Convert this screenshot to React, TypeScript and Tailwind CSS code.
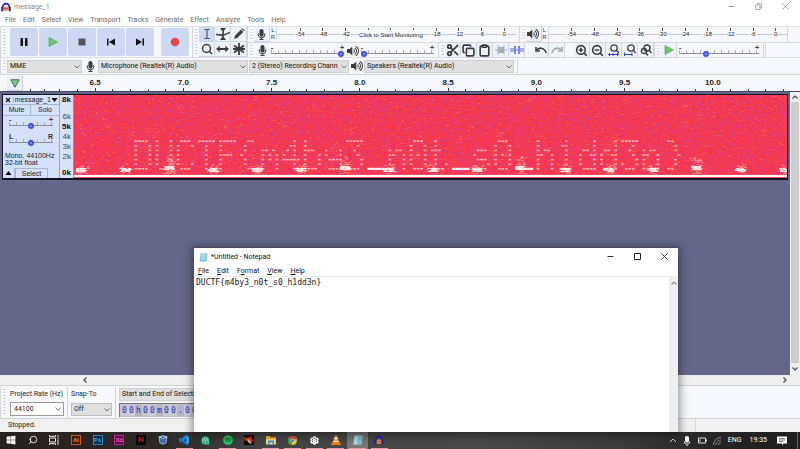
import React from "react";
import { Scissors, Copy, Clipboard, ZoomIn, ZoomOut, Search, Settings } from "lucide-react";
import { FaMicrophone, FaVolumeUp, FaSpotify, FaWindows } from "react-icons/fa";

/* ---------- Spectrogram ---------- */

const GLYPHS: Record<string, string[]> = {
  D: ["####.", "#...#", "#...#", "#...#", "#...#", "#...#", "####."],
  U: ["#...#", "#...#", "#...#", "#...#", "#...#", "#...#", ".###."],
  C: [".###.", "#...#", "#....", "#....", "#....", "#...#", ".###."],
  T: ["#####", "..#..", "..#..", "..#..", "..#..", "..#..", "..#.."],
  F: ["#####", "#....", "#....", "####.", "#....", "#....", "#...."],
  "{": ["..##.", ".#...", ".#...", "#....", ".#...", ".#...", "..##."],
  "}": [".##..", "...#.", "...#.", "....#", "...#.", "...#.", ".##.."],
  m: [".....", ".....", "##.#.", "#.#.#", "#.#.#", "#...#", "#...#"],
  "4": ["...#.", "..##.", ".#.#.", "#..#.", "#####", "...#.", "...#."],
  b: ["#....", "#....", "###..", "#...#", "#...#", "#...#", "####."],
  y: [".....", ".....", "#...#", "#...#", ".####", "....#", ".###."],
  "3": ["#####", "...#.", "..#..", "...#.", "....#", "#...#", ".###."],
  _: [".....", ".....", ".....", ".....", ".....", ".....", "#####"],
  n: [".....", ".....", "#.##.", "##..#", "#...#", "#...#", "#...#"],
  "0": [".###.", "#...#", "#...#", "#.#.#", "#...#", "#...#", ".###."],
  t: [".#...", ".#...", "###..", ".#...", ".#...", ".#..#", "..##."],
  s: [".....", ".....", ".###.", "#....", ".###.", "....#", "####."],
  h: ["#....", "#....", "#.##.", "##..#", "#...#", "#...#", "#...#"],
  "1": ["..#..", ".##..", "..#..", "..#..", "..#..", "..#..", ".###."],
  d: ["....#", "....#", ".##.#", "#..##", "#...#", "#...#", ".####"],
};
const MESSAGE = "DUCTF{m4by3_n0t_s0_h1dd3n}";

function random(seed: number) {
  let s = seed;
  return () => {
    s ^= s << 13;
    s ^= s >>> 17;
    s ^= s << 5;
    return (s >>> 0) / 4294967296;
  };
}

const NOISE = ["#fc3c40", "#ec3a66", "#e43c80", "#fa5048", "#f87058", "#d440a4", "#b850d0"];

function noisePaths() {
  const rnd = random(7919);
  const out = NOISE.map(() => "");
  for (let y = 0; y < 83; y++) {
    for (let x = 0; x < 714; x += 2) {
      const r = rnd();
      let k = -1;
      if (r < 0.2) k = 0;
      else if (r < 0.42) k = 1;
      else if (r < 0.55) k = 2;
      else if (r < 0.62) k = 3;
      else if (r < 0.637) k = 4;
      else if (r < 0.69 - y / 3500) k = 5;
      else if (r > 0.985 + y / 8000) k = 6;
      if (k >= 0) out[k] += `M${x} ${y}h2v1h-2z`;
    }
  }
  return out;
}
const PATHS = noisePaths();

function bursts() {
  const rnd = random(2111);
  const soft: string[] = [];
  const hard: string[] = [];
  for (let i = 0; i < 17; i++) {
    const cx = 7 + i * 44;
    const tall = i % 4 === 2;
    const cy = tall ? 72 : 74;
    for (let n = 0; n < (tall ? 60 : 34); n++) {
      const x = cx + Math.round((rnd() + rnd() - 1) * 7);
      const y = cy + Math.round((rnd() + rnd() - 1) * (tall ? 12 : 6));
      soft.push(`M${x} ${Math.min(y, 78)}h2v1h-2z`);
    }
    for (let n = 0; n < 26; n++) {
      const x = cx - 5 + Math.floor(rnd() * 9);
      const y = cy - 1 + Math.floor(rnd() * 4);
      hard.push(`M${x} ${y}h3v1h-3z`);
    }
  }
  return [soft.join(""), hard.join("")];
}
const [SOFT, HARD] = bursts();

function Spectrogram() {
  const cells: React.ReactNode[] = [];
  MESSAGE.split("").forEach((c, i) =>
    GLYPHS[c].forEach((row, r) =>
      row.split("").forEach((bit, k) => {
        if (bit !== "#") return;
        const solid = c === "_";
        cells.push(
          <rect
            key={`${i}-${r}-${k}`}
            x={60.5 + i * 21.2 + k * 3.53}
            y={45.4 + r * 4.6 - (solid ? 0.2 : 0)}
            width={solid ? 3.6 : 2.8}
            height={solid ? 2.2 : 1.6}
            fill={solid ? "#fff6f0" : "#ffc4ba"}
            opacity={solid ? 1 : 0.85}
          />
        );
      })
    )
  );
  return (
    <svg role="img" aria-label="Spectrogram" className="block h-[83px] w-full min-w-0 flex-1" viewBox="0 0 714 83" preserveAspectRatio="none">
      <rect width="714" height="83" fill="#f4364e" />
      {PATHS.map((d, i) => (
        <path key={i} d={d} fill={NOISE[i]} opacity="0.8" />
      ))}
      {cells}
      <path d={SOFT} fill="#ffb0a8" opacity="0.6" />
      <path d={HARD} fill="#fff0ea" opacity="0.9" />
      <rect y="79" width="714" height="4" fill="#f5485e" />
      <rect y="80" width="714" height="2" fill="#fff" />
    </svg>
  );
}

/* ---------- Shared controls ---------- */

function Grip() {
  return (
    <div className="flex w-[7px] shrink-0 self-stretch border-l border-[#d4d6dc] py-[2px] pl-[2px]">
      <div className="w-[3px] bg-[repeating-linear-gradient(#d2d4da_0_1px,#f6f8fe_1px_3px)]" />
    </div>
  );
}

function Tool({ label, children, active }: { label: string; children: React.ReactNode; active?: boolean }) {
  return (
    <button
      aria-label={label}
      className={
        "flex h-[15px] w-[16px] shrink-0 items-center justify-center border-r border-b border-[#d0d5e2] text-[#3c3c3c] " +
        (active ? "bg-[#cddaf3]" : "bg-[#eef3fd]")
      }
    >
      {children}
    </button>
  );
}

function Chevron({ className }: { className?: string }) {
  return (
    <svg viewBox="0 0 6 4" className={"h-[4px] w-[6px] " + (className ?? "")} fill="none" stroke="#555" strokeWidth="0.8">
      <path d="M0.5 0.5L3 3L5.5 0.5" />
    </svg>
  );
}

function Picker({ label, value, className, box }: { label: string; value: string; className: string; box: string }) {
  return (
    <div className={"relative shrink-0 " + className}>
      <select
        aria-label={label}
        className={"block h-[13px] w-full appearance-none border pl-[2px] text-[7px] leading-[11px] text-[#111] " + box}
      >
        <option>{value}</option>
      </select>
      <Chevron className="pointer-events-none absolute top-[5px] right-[2px]" />
    </div>
  );
}

function Slider({ label, value, className }: { label: string; value: number; className: string }) {
  const pan = label === "Pan";
  return (
    <div className={"flex flex-col " + className}>
      <div className="flex h-[5px] justify-between text-[7px] leading-[5px] font-bold text-[#333]">
        <span>{pan ? "L" : "-"}</span>
        <span>{pan ? "R" : "+"}</span>
      </div>
      <input
        type="range"
        aria-label={label}
        defaultValue={value}
        className="block h-[7px] w-full appearance-none bg-[linear-gradient(#0000_3px,#8c8f98_3px_4px,#0000_4px),repeating-linear-gradient(90deg,#a9acb6_0_1px,#0000_1px_7px)] bg-[length:100%_100%,100%_3px] bg-no-repeat [&::-webkit-slider-thumb]:h-[6px] [&::-webkit-slider-thumb]:w-[6px] [&::-webkit-slider-thumb]:appearance-none [&::-webkit-slider-thumb]:rounded-full [&::-webkit-slider-thumb]:border-2 [&::-webkit-slider-thumb]:border-[#4450e0] [&::-webkit-slider-thumb]:bg-[#9aa2f2]"
      />
    </div>
  );
}

function Mark({ children }: { children: React.ReactNode }) {
  return (
    <div className="flex flex-col items-center">
      <div className="h-[3px] w-px bg-[#555]" />
      <span className="h-[6px] bg-[#f6f8fe] px-px leading-[7px]">{children}</span>
    </div>
  );
}

function Meter({ monitor, icon, label }: { monitor?: boolean; icon: React.ReactNode; label: string }) {
  return (
    <div className="flex h-[16px] min-w-0 flex-1 items-start">
      <Tool label={label}>{icon}</Tool>
      <div className="flex w-[7px] shrink-0 flex-col items-center border-r border-[#d0d5e2] text-[6px] leading-[7px] text-[#333]">
        <span>L</span>
        <span>R</span>
      </div>
      <div className="min-w-0 flex-1 bg-[linear-gradient(#0000_7px,#c4c7d0_7px_8px,#0000_8px)] pt-px pl-[12px]">
        <div className="grid grid-cols-10 text-[6px] text-[#222]">
          <Mark>-54</Mark>
          <Mark>-48</Mark>
          <Mark>-42</Mark>
          {monitor ? (
            <div className="col-span-3 flex flex-col items-center">
              <div className="flex h-[3px] w-full justify-around">
                <div className="h-[2px] w-px bg-[#555]" />
                <div className="h-[2px] w-px bg-[#555]" />
                <div className="h-[2px] w-px bg-[#555]" />
              </div>
              <button className="h-[8px] bg-[#f6f8fe] leading-[8px] whitespace-nowrap">Click to Start Monitoring</button>
            </div>
          ) : (
            <>
              <Mark>-36</Mark>
              <Mark>-30</Mark>
              <Mark>-24</Mark>
            </>
          )}
          <Mark>-18</Mark>
          <Mark>-12</Mark>
          <Mark>-6</Mark>
          <Mark>0</Mark>
        </div>
      </div>
    </div>
  );
}

/* ---------- Toolbars ---------- */

function BigButton({ label, children }: { label: string; children: React.ReactNode }) {
  return (
    <button aria-label={label} className="flex size-[28px] shrink-0 items-center justify-center rounded-[2px] bg-[#cdd9f2]">
      <svg viewBox="0 0 10 10" className="size-[10px]">{children}</svg>
    </button>
  );
}

function Toolbars() {
  return (
    <div className="flex h-[32px] shrink-0 border-y border-[#dcdee4] bg-[#f6f8fe] font-['Liberation_Sans',sans-serif]">
      <div className="flex shrink-0 items-center">
        <Grip />
        <div className="flex gap-px pl-[3px]">
          <BigButton label="Pause"><path d="M1.500 1h2.500v8h-2.500zM6 1h2.500v8H6z" fill="#111" /></BigButton>
          <BigButton label="Play"><path d="M1 0.500L9.500 5L1 9.500z" fill="#6cc86c" stroke="#4aa04e" strokeWidth="0.6" /></BigButton>
          <BigButton label="Stop"><path d="M1.500 1.500h7v7h-7z" fill="#555" /></BigButton>
          <BigButton label="Skip to start"><path d="M1 1.500h1.500v7H1zM9 1.500v7L3 5z" fill="#111" /></BigButton>
          <BigButton label="Skip to end"><path d="M7.500 1.500H9v7H7.500zM1 1.500v7L7 5z" fill="#111" /></BigButton>
        </div>
        <div className="pr-[3px] pl-[7px]">
          <BigButton label="Record"><circle cx="5" cy="5" r="4.300" fill="#e5484a" /></BigButton>
        </div>
      </div>
      <Grip />
      <div className="grid shrink-0 grid-cols-3 grid-rows-2">
        <Tool label="Selection" active>
          <svg viewBox="0 0 12 12" className="size-[12px]" fill="none" stroke="#3c3c3c"><path d="M3.500 1.500h2l.5.5.5-.5h2M6 2v8M3.500 10.500h2l.5-.5.5.5h2" /></svg>
        </Tool>
        <Tool label="Envelope">
          <svg viewBox="0 0 14 12" className="h-[12px] w-[14px]" fill="#3c3c3c"><path d="M4 0h6L7.800 3v6L10 12H4l2.200-3V3z" /><path d="M0 5.500c4 1.500 9 1 14-2v1.600c-5 3-10 3.500-14 2z" /></svg>
        </Tool>
        <Tool label="Draw">
          <svg viewBox="0 0 12 12" className="size-[12px]" fill="#3c3c3c"><path d="M1 11l1-3.200L8 1.600l2.300 2.300L4.200 10zM8.700 1l.8-.8 2.300 2.300-.8.8z" /></svg>
        </Tool>
        <Tool label="Zoom"><Search size={12} strokeWidth={3} /></Tool>
        <Tool label="Time shift">
          <svg viewBox="0 0 14 10" className="h-[10px] w-[13px]" fill="#3c3c3c"><path d="M0 5l4-3.500v2.500h6V1.500L14 5l-4 3.500V6H4v2.500z" /></svg>
        </Tool>
        <Tool label="Multi-tool">
          <svg viewBox="0 0 12 12" className="size-[12px]" stroke="#3c3c3c" strokeWidth="1.800"><path d="M6 0v12M1 2.500l10 7M11 2.500l-10 7M0 6h12" /></svg>
        </Tool>
      </div>
      <div className="flex min-w-0 flex-1 flex-col">
        <div className="flex h-[16px] border-b border-[#d4d6dc]">
          <Grip />
          <Meter monitor label="Recording meter" icon={<FaMicrophone size={11} />} />
          <div className="w-[3px]" />
          <Grip />
          <Meter label="Playback meter" icon={<FaVolumeUp size={12} />} />
          <div className="w-[13px] border-l border-[#d4d6dc]" />
        </div>
        <div className="flex h-[15px]">
          <Grip />
          <div className="flex w-[17px] justify-center pt-[2px] text-[#3c3c3c]"><FaMicrophone size={11} /></div>
          <Slider label="Recording volume" value={100} className="w-[73px] pt-[2px]" />
          <div className="flex w-[17px] items-center justify-center text-[#3c3c3c]"><FaVolumeUp size={12} /></div>
          <Slider label="Playback volume" value={0} className="w-[73px] pt-[2px]" />
          <div className="w-[4px]" />
          <Grip />
          <Tool label="Cut"><Scissors size={14} strokeWidth={3} /></Tool>
          <Tool label="Copy"><Copy size={13} strokeWidth={3} /></Tool>
          <Tool label="Paste"><Clipboard size={13} strokeWidth={3} /></Tool>
          <Tool label="Trim audio">
            <svg viewBox="0 0 12 10" className="h-[10px] w-[12px]"><path d="M0 5h12" stroke="#aab" /><path d="M3 2h6v6H3z" fill="#a9adbe" /><path d="M3 0v10M9 0v10" stroke="#99a" strokeWidth="0.6" /></svg>
          </Tool>
          <Tool label="Silence audio">
            <svg viewBox="0 0 14 10" className="h-[10px] w-[14px]"><path d="M0 3h4v4H0zM10 3h4v4h-4z" fill="#a3adf4" /><path d="M4 1h2v8H4zM8 1h2v8H8z" fill="#7b88ec" /><path d="M6 5h2" stroke="#777" /></svg>
          </Tool>
          <div className="w-[8px]" />
          <Tool label="Undo">
            <svg viewBox="0 0 12 8" className="h-[8px] w-[12px]" fill="none" stroke="#3c3c3c" strokeWidth="1.600"><path d="M1.500 4.500C4 1 9 1 11.200 7" /><path d="M1 1v4h4" /></svg>
          </Tool>
          <Tool label="Redo">
            <svg viewBox="0 0 12 8" className="h-[8px] w-[12px]" fill="none" stroke="#a4a4a4" strokeWidth="1.600"><path d="M10.500 4.500C8 1 3 1 .8 7" /><path d="M11 1v4H7" /></svg>
          </Tool>
          <div className="w-[9px]" />
          <Tool label="Zoom in"><ZoomIn size={13} strokeWidth={3} /></Tool>
          <Tool label="Zoom out"><ZoomOut size={13} strokeWidth={3} /></Tool>
          <Tool label="Fit selection">
            <svg viewBox="0 0 12 12" className="size-[12px]" fill="none" stroke="#3c3c3c" strokeWidth="1.300"><circle cx="6" cy="4" r="3.200" /><path d="M8.300 6.300L11 9" /><path d="M0 10.500h11M2 9l-1.500 1.500L2 12M9 9l1.500 1.500L9 12M5 9v3" stroke="#3440e0" strokeWidth="1" /></svg>
          </Tool>
          <Tool label="Fit project">
            <svg viewBox="0 0 12 12" className="size-[12px]" fill="none" stroke="#3c3c3c" strokeWidth="1.300"><circle cx="7" cy="4" r="3.200" /><path d="M9.300 6.300L11.800 9" /><path d="M0 10.500h8M0.500 8.500v4M8 8.500v4" stroke="#3440e0" strokeWidth="1" /></svg>
          </Tool>
          <Tool label="Zoom toggle">
            <svg viewBox="0 0 12 12" className="size-[12px]" fill="none" stroke="#3c3c3c" strokeWidth="1.400"><circle cx="7" cy="4" r="3" /><circle cx="4" cy="7" r="2.600" /><path d="M9 6l2.500 3M6 9l2 2.500" /></svg>
          </Tool>
          <Grip />
          <Tool label="Play at speed">
            <svg viewBox="0 0 10 10" className="size-[10px]"><path d="M1 .5L9.500 5L1 9.500z" fill="#6cc86c" stroke="#4aa04e" strokeWidth="0.6" /></svg>
          </Tool>
          <div className="w-[2px]" />
          <Slider label="Playback speed" value={32} className="w-[80px] pt-[2px]" />
          <div className="ml-[4px] w-[3px] border-x border-[#d4d6dc]" />
        </div>
      </div>
    </div>
  );
}

function DeviceBar() {
  const box = "border-[#cfcfcf] bg-[#e0e0e0]";
  return (
    <div className="flex h-[17px] shrink-0 items-center border-b border-[#d0d2d8] bg-[#f6f8fe]">
      <Grip />
      <Picker label="Audio host" value="MME" className="w-[75px]" box={box} />
      <div className="flex w-[16px] justify-center text-[#3c3c3c]"><FaMicrophone size={11} /></div>
      <Picker label="Recording device" value="Microphone (Realtek(R) Audio)" className="w-[150px]" box={box} />
      <div className="w-px" />
      <Picker label="Recording channels" value="2 (Stereo) Recording Chann" className="w-[100px]" box={box} />
      <div className="flex w-[15px] justify-center text-[#3c3c3c]"><FaVolumeUp size={12} /></div>
      <Picker label="Playback device" value="Speakers (Realtek(R) Audio)" className="w-[150px]" box={box} />
      <div className="ml-[3px] h-full border-l border-[#d4d6dc]" />
    </div>
  );
}

function Minor() {
  return (
    <div className="flex h-[4px] flex-1 items-end justify-center">
      <div className="h-[2px] w-px bg-[#333]" />
    </div>
  );
}

function Ruler() {
  return (
    <div className="flex h-[17px] shrink-0 items-end border-b border-[#444a5c] bg-[#f6f8fe] font-['Liberation_Sans',sans-serif]">
      <button aria-label="Pinned play head" className="ml-[7px] flex h-[15px] w-[16px] items-center justify-center border-r border-b border-[#c8cede] bg-[#e9effb]">
        <svg viewBox="0 0 10 9" className="h-[9px] w-[10px]"><path d="M.8.8h8.400L5 8.200z" fill="#7fd07f" stroke="#3c5c40" strokeWidth="0.9" /></svg>
      </button>
      <div className="flex w-[28px]"><Minor /><Minor /></div>
      {["6.5", "7.0", "7.5", "8.0", "8.5", "9.0", "9.5", "10.0"].map((n) => (
        <div key={n} className="flex flex-1 flex-col items-stretch">
          <span className="text-center text-[8px] leading-[8px] font-bold text-[#222]">{n}</span>
          <div className="flex h-[4px] items-end">
            <Minor />
            <Minor />
            <div className="flex flex-1 justify-center"><div className="h-[3px] w-px bg-[#333]" /></div>
            <Minor />
            <Minor />
          </div>
        </div>
      ))}
      <div className="flex w-[43px] pr-[8px]"><Minor /><Minor /></div>
    </div>
  );
}

/* ---------- Track ---------- */

function TrackPanel() {
  return (
    <div className="flex w-[57px] shrink-0 flex-col border-r border-[#9aa6c0] bg-[#d3e1fa] font-['Liberation_Sans',sans-serif] text-[7px] text-[#222]">
      <div className="flex h-[10px] items-center border-b border-[#a9b6d2] leading-[9px]">
        <button aria-label="Close track" className="flex w-[11px] justify-center border-r border-[#a9b6d2] pl-px">
          <svg viewBox="0 0 6 6" className="size-[6px]" stroke="#111" strokeWidth="1.100"><path d="M1 1l4 4M5 1L1 5" /></svg>
        </button>
        <button className="flex flex-1 items-center justify-between pr-px pl-px whitespace-nowrap">
          message_1
          <svg viewBox="0 0 6 4" className="h-[4px] w-[7px]"><path d="M0 0h6L3 4z" /></svg>
        </button>
      </div>
      <div className="grid h-[11px] grid-cols-2 border-b border-[#a9b6d2] leading-[10px]">
        <button className="border-r border-[#a9b6d2]">Mute</button>
        <button>Solo</button>
      </div>
      <Slider label="Gain" value={50} className="px-[6px] pt-px" />
      <Slider label="Pan" value={50} className="px-[6px] pt-[5px]" />
      <div className="pt-[6px] pl-[2px] leading-[7px] whitespace-nowrap">
        <div>Mono, 44100Hz</div>
        <div>32-bit float</div>
      </div>
      <div className="mt-auto flex h-[10px]">
        <button aria-label="Collapse" className="flex w-[12px] items-center justify-center border-r border-[#a9b6d2]">
          <svg viewBox="0 0 6 4" className="h-[4px] w-[7px]"><path d="M0 4h6L3 0z" /></svg>
        </button>
        <button className="w-[33px] border-x border-t border-[#a9b6d2] leading-[9px]">Select</button>
      </div>
    </div>
  );
}

function Axis() {
  return (
    <div className="flex w-[14px] shrink-0 flex-col items-end border-r border-[#8890a8] bg-[#d8e3f6] pr-[2px] font-['Liberation_Sans',sans-serif] text-[8px] leading-[10px] text-[#444]">
      <span className="mb-[7px] font-bold text-[#111]">8k</span>
      <span>6k</span>
      <span className="font-bold text-[#111]">5k</span>
      <span>4k</span>
      <span>3k</span>
      <span>2k</span>
      <span className="mt-auto font-bold text-[#111]">0k</span>
    </div>
  );
}

/* ---------- Bottom bars ---------- */

function SelectionBar() {
  return (
    <div className="flex h-[34px] shrink-0 border-y border-[#cfd1d6] bg-[#f6f8fe] pt-[1px] text-[7px] text-[#222]">
      <Grip />
      <div className="flex w-[56px] flex-col justify-between py-[2px] pl-[3px]">
        <label htmlFor="rate" className="leading-[11px] whitespace-nowrap">Project Rate (Hz)</label>
        <div className="relative">
          <input id="rate" defaultValue="44100" className="block h-[14px] w-[54px] border border-[#9a9a9a] bg-white pl-[3px] text-[7px]" />
          <Chevron className="pointer-events-none absolute top-[5px] left-[45px]" />
        </div>
      </div>
      <div className="ml-[4px] flex w-[46px] flex-col justify-between border-l border-[#cfd1d6] py-[2px] pl-[3px]">
        <span className="leading-[11px]">Snap-To</span>
        <Picker label="Snap-To" value="Off" className="w-[41px]" box="border-[#bdbdbd] bg-[#e0e0e0]" />
      </div>
      <div className="ml-[2px] flex flex-col justify-between border-l border-[#cfd1d6] py-[1px] pl-[3px]">
        <Picker label="Selection mode" value="Start and End of Selection" className="w-[120px]" box="border-[#cfcfcf] bg-[#e0e0e0]" />
        <div className="flex h-[14px] w-[120px] items-center border-t border-l border-[#777] bg-[#c3c4cc] pl-px font-['DejaVu_Sans_Mono',monospace] text-[8px] text-[#2a2ab8]">
          {"00h00m00.000s".split("").map((c, i) => (
            <span key={i} className={"w-[7px] shrink-0 text-center leading-[11px] " + (/\d/.test(c) ? "bg-[#c9cad2]" : "bg-[#b4b6c6]")}>{c}</span>
          ))}
        </div>
      </div>
    </div>
  );
}

function Arrow({ rotate }: { rotate: string }) {
  return (
    <svg viewBox="0 0 6 4" className={"h-[4px] w-[6px] " + rotate} fill="none" stroke="#444" strokeWidth="1.200"><path d="M0.500 3.500L3 1l2.500 2.500" /></svg>
  );
}

/* ---------- Notepad ---------- */

function Notepad() {
  return (
    <section className="absolute top-[247px] right-[122px] bottom-0 left-[194px] flex flex-col border-t border-[#4a4a55] bg-white shadow-[0_2px_8px_2px_rgba(0,0,0,0.4)]">
      <header className="flex h-[17px] shrink-0 items-center pr-[10px] pl-[5px] text-[8px] text-[#111]">
        <svg viewBox="0 0 10 11" className="mr-[3px] h-[10px] w-[9px]"><path d="M2 1h7.500l-1 9.500H.5z" fill="#7fc4d6" /><path d="M2.500 2.500h5l-.7 6H1.800z" fill="#a6dceb" /><path d="M2 1h7.500v1H2z" fill="#d8d8c8" /></svg>
        <h1 className="flex-1 pt-px text-[7px]">*Untitled - Notepad</h1>
        <div className="flex gap-[20px]">
          <button aria-label="Minimise"><svg viewBox="0 0 7 7" className="size-[7px]" stroke="#333"><path d="M.5 3.500h6" /></svg></button>
          <button aria-label="Maximise"><svg viewBox="0 0 7 7" className="size-[7px]" fill="none" stroke="#222"><path d="M.5.5h6v6h-6z" /></svg></button>
          <button aria-label="Close"><svg viewBox="0 0 7 7" className="size-[7px]" stroke="#222" strokeWidth="0.9"><path d="M.5.5l6 6M6.500.5l-6 6" /></svg></button>
        </div>
      </header>
      <nav className="flex h-[12px] shrink-0 items-center gap-[8px] border-b border-[#ececec] pt-px pl-[4px] text-[7px] text-[#111]">
        {["File", "Edit", "Format", "View", "Help"].map((m) => (
          <button key={m}>
            {m === "Format" ? <>F<u>o</u>rmat</> : <><u>{m[0]}</u>{m.slice(1)}</>}
          </button>
        ))}
      </nav>
      <div className="flex min-h-0 flex-1">
        <textarea
          aria-label="Document"
          defaultValue="DUCTF{m4by3_n0t_s0_h1dd3n}"
          className="flex-1 resize-none bg-white pt-px pl-[2px] font-['DejaVu_Sans_Mono',monospace] text-[8px] leading-[10px] text-[#222] outline-none"
        />
        <div className="flex w-[9px] justify-center bg-[#efefef] pt-[4px]"><Arrow rotate="opacity-50" /></div>
      </div>
    </section>
  );
}

/* ---------- Taskbar ---------- */

function Headphones({ className }: { className: string }) {
  return (
    <svg viewBox="0 0 12 12" className={className}>
      <path d="M2 9V6a4 4 0 0 1 8 0v3" fill="none" stroke="#1b24c8" strokeWidth="2" />
      <path d="M.3 6h2.500v5H.3zM9.200 6h2.500v5H9.200z" fill="#1b24c8" />
      <path d="M4 5.500h4L9 8 8 10.500H4L3 8z" fill="#f59a1c" />
      <path d="M3.500 8h5" stroke="#d8301c" strokeWidth="1" />
    </svg>
  );
}

function TaskButton({ label, open, active, children }: { label: string; open?: boolean; active?: boolean; children: React.ReactNode }) {
  return (
    <button aria-label={label} className={"flex flex-1 flex-col items-center justify-between " + (active ? "bg-[#777]" : "")}>
      <span className="flex h-[16px] items-center justify-center">{children}</span>
      <span className={"h-px w-[17px] " + (open ? "bg-[#f29aa2]" : "")} />
    </button>
  );
}

function Badge({ text, className }: { text: string; className: string }) {
  return <span className={"flex size-[10px] items-center justify-center border text-[6px] leading-[6px] font-bold " + className}>{text}</span>;
}

function Taskbar() {
  return (
    <footer className="flex h-[17px] shrink-0 items-stretch bg-[linear-gradient(90deg,#262120_0%,#2c2827_20%,#444_32%,#494949_60%,#3c3c3c_78%,#242424_90%,#1e1e1e_100%)] text-[7px] text-white">
      <nav className="flex w-[390px] shrink-0">
        <TaskButton label="Start"><FaWindows size={10} /></TaskButton>
        <TaskButton label="Search"><Search size={10} strokeWidth={2} className="-scale-x-100" /></TaskButton>
        <TaskButton label="Task view">
          <svg viewBox="0 0 10 10" className="size-[10px]" fill="none" stroke="#fff" strokeWidth="0.9"><path d="M.5 3h6v4h-6zM.5 0v1.300h6V0M.5 10V8.700h6V10M9 0v2M9 4.500V10M8.300 3.200h1.400" /></svg>
        </TaskButton>
        <TaskButton label="Illustrator"><Badge text="Ai" className="border-[#c8600c] bg-[#3a1c06] text-[#f07c14]" /></TaskButton>
        <TaskButton label="Photoshop"><Badge text="Ps" className="border-[#1c8cc0] bg-[#06283a] text-[#30b0ea]" /></TaskButton>
        <TaskButton label="Adobe XD"><Badge text="Xd" className="border-[#d020a0] bg-[#48063a] text-[#f050c0]" /></TaskButton>
        <TaskButton label="Netflix"><span className="flex size-[10px] items-center justify-center bg-black text-[8px] leading-[8px] font-bold text-[#d8101c]">N</span></TaskButton>
        <TaskButton label="VirtualBox">
          <svg viewBox="0 0 10 10" className="size-[10px]"><path d="M.5 1.500L5 .3l4.500 1.200L8.500 8 5 9.800 1.500 8z" fill="#a9c8ea" /><path d="M1.500 2.500L5 4v5L2 7.500zM8.500 2.500L5 4v5l3-1.500z" fill="#3c70b0" /><path d="M3 2l2-.6L7 2 5 3z" fill="#1c3c70" /></svg>
        </TaskButton>
        <TaskButton label="Visual Studio Code" open>
          <svg viewBox="0 0 10 10" className="size-[10px]"><path d="M7.200.2L10 1.500v7L7.200 9.800 1.500 4.500z" fill="#2a9fe8" /><path d="M7.200 9.800L1.300 5.500.2 6.600 0 3.500l1.300-.9 5.900 4.600z" fill="#1478c0" /><path d="M7.200 3v4L4.600 5z" fill="#2c2827" /><path d="M.2 6.800L7.200.2v2.800L1.300 7.600z" fill="#1a86d2" /></svg>
        </TaskButton>
        <TaskButton label="Android Studio">
          <svg viewBox="0 0 10 10" className="size-[9px]"><path d="M5 .5a4 4 0 0 1 4 4v5H5A4.500 4.500 0 0 1 5 .5z" fill="#3ddc94" /><circle cx="5" cy="4.500" r="2" fill="#fff" /><path d="M5 3l2 5.500M5 3L3 8.500" stroke="#2a6c60" strokeWidth="0.9" /></svg>
        </TaskButton>
        <TaskButton label="Spotify" open><FaSpotify size={10} color="#1fd05f" /></TaskButton>
        <TaskButton label="Game">
          <svg viewBox="0 0 10 10" className="size-[10px]"><path d="M0 0h10v10H0z" fill="#190808" /><path d="M0 2l4 1 3-2 1 3 2 2-3 1-2-2-4 1z" fill="#d83420" /><path d="M3 5l2-1 3 5-3-1z" fill="#e8b0a0" /></svg>
        </TaskButton>
        <TaskButton label="File Explorer" open>
          <svg viewBox="0 0 10 9" className="h-[9px] w-[10px]"><path d="M0 0h4l1 1.200h5V8H0z" fill="#f4b932" /><path d="M0 3h10v5.500H0z" fill="#fcdc70" /><path d="M2 4.500h6V9H6.500V6.500h-3V9H2z" fill="#3a98dc" /></svg>
        </TaskButton>
        <TaskButton label="Chrome" open>
          <svg viewBox="0 0 10 10" className="size-[9px]"><circle cx="5" cy="5" r="5" fill="#f9c820" /><path d="M5 5L.7 2.500A5 5 0 0 1 9.500 3z" fill="#e64434" /><path d="M5 5L.7 2.500A5 5 0 0 0 4.500 10z" fill="#2da44e" /><circle cx="5" cy="5" r="2.300" fill="#fff" /><circle cx="5" cy="5" r="1.800" fill="#4484f0" /></svg>
        </TaskButton>
        <TaskButton label="Settings" open><Settings size={9} strokeWidth={4} /></TaskButton>
        <TaskButton label="VLC" open>
          <svg viewBox="0 0 10 10" className="size-[10px]"><path d="M4.300 0h1.400l3 8H1.300z" fill="#f48414" /><path d="M3.600 2.300h2.800l.7 1.900H2.900zM2.300 5.700h5.400l.4 1H1.900z" fill="#fff" /><path d="M1 7.500h8l1 2.500H0z" fill="#f07c10" /></svg>
        </TaskButton>
        <TaskButton label="Notepad" open active>
          <svg viewBox="0 0 10 10" className="size-[10px]"><path d="M1.500.5h8L8.300 9.500H.3z" fill="#a8dce6" /><path d="M5 .5h4.500L8.300 9.500H4z" fill="#7cbccc" /></svg>
        </TaskButton>
        <TaskButton label="Audacity" open><Headphones className="size-[10px]" /></TaskButton>
      </nav>
      <div className="ml-auto flex items-center pr-[2px]">
        <svg viewBox="0 0 8 5" className="mr-[6px] h-[5px] w-[8px]" fill="none" stroke="#ddd"><path d="M1 4l3-3 3 3" /></svg>
        <svg viewBox="0 0 8 10" className="mr-[6px] h-[10px] w-[8px]" fill="#fff"><rect x="2" y="0" width="4" height="6.500" rx="1.800" /><path d="M1 5.500a3 3 0 0 0 6 0h-.8a2.200 2.200 0 0 1-4.400 0zM3.500 8h1v2h-1z" /></svg>
        <svg viewBox="0 0 10 7" className="mr-[6px] h-[7px] w-[10px]" fill="none" stroke="#ddd"><path d="M1.500 1h7v5h-7zM9.500 2.500v2M3 2.500v2" /></svg>
        <svg viewBox="0 0 8 8" className="mr-[7px] h-[8px] w-[8px]" fill="none" stroke="#888"><path d="M.5 8A7.500 7.500 0 0 1 8 .5M3 8a5 5 0 0 1 5-5M5.500 8A2.500 2.500 0 0 1 8 5.500" /></svg>
        <span className="mr-[8px]">ENG</span>
        <time className="mr-[10px]">19:35</time>
        <svg viewBox="0 0 10 10" className="mr-[10px] size-[10px]"><path d="M0 .5h10v7H6.500L5 9.500V7.500H0z" fill="#fff" /><path d="M2 2.500h6M2 4h6M2 5.500h4" stroke="#444" strokeWidth="0.7" /></svg>
        <div className="h-[17px] w-px bg-[#666]" />
      </div>
    </footer>
  );
}

/* ---------- Page ---------- */

export default function App() {
  return (
    <div className="flex h-screen flex-col overflow-hidden bg-white font-[Roboto,'Noto_Sans',sans-serif]">
      <div className="relative flex min-h-0 flex-1 flex-col">
        <header className="flex h-[13px] shrink-0 items-center bg-white pr-[11px] pl-px text-[7px] text-[#888]">
          <Headphones className="mr-[3px] size-[10px]" />
          <span className="flex-1 pt-px">message_1</span>
          <div className="flex gap-[20px]">
            <button aria-label="Minimise"><svg viewBox="0 0 7 7" className="size-[7px]" stroke="#999"><path d="M.5 3.500h6" /></svg></button>
            <button aria-label="Restore"><svg viewBox="0 0 7 7" className="size-[7px]" fill="none" stroke="#999" strokeWidth="0.8"><path d="M.5 2h4.500v4.500H.5zM2 2V.5h4.500V5H5" /></svg></button>
            <button aria-label="Close"><svg viewBox="0 0 7 7" className="size-[7px]" stroke="#999" strokeWidth="0.9"><path d="M.5.5l6 6M6.500.5l-6 6" /></svg></button>
          </div>
        </header>
        <nav className="flex h-[13px] shrink-0 items-center gap-[7px] bg-white pt-px pl-[5px] text-[7px] text-[#6c6c6c]">
          {["File", "Edit", "Select", "View", "Transport", "Tracks", "Generate", "Effect", "Analyze", "Tools", "Help"].map((m) => (
            <button key={m}>{m}</button>
          ))}
        </nav>
        <Toolbars />
        <DeviceBar />
        <Ruler />
        <main className="flex min-h-0 flex-1 bg-[#64668a]">
          <div className="min-w-0 flex-1 pt-[2px] pr-[2px] pl-[2px]">
            <div className="flex border border-b-2 border-[#14141e]">
              <TrackPanel />
              <Axis />
              <Spectrogram />
            </div>
          </div>
          <div className="flex w-[10px] shrink-0 flex-col items-center bg-[#f0f0f0] text-[#444]">
            <div className="flex h-[10px] items-center"><Arrow rotate="" /></div>
            <div className="w-[8px] flex-1 bg-[#cdcdcd]" />
            <div className="flex h-[12px] items-center"><Arrow rotate="rotate-180" /></div>
          </div>
        </main>
        <div className="flex h-[10px] shrink-0 items-center justify-between bg-[#efefef] pr-[12px] pl-[82px]">
          <Arrow rotate="-rotate-90" />
          <Arrow rotate="rotate-90" />
        </div>
        <SelectionBar />
        <div className="flex h-[13px] shrink-0 items-center bg-[#f0f0f0] pl-[8px] text-[7px] text-[#222]">
          <span className="flex-1">Stopped.</span>
          <div className="mr-[104px] h-full border-l border-[#d8d8d8]" />
        </div>
        <Notepad />
      </div>
      <Taskbar />
    </div>
  );
}
